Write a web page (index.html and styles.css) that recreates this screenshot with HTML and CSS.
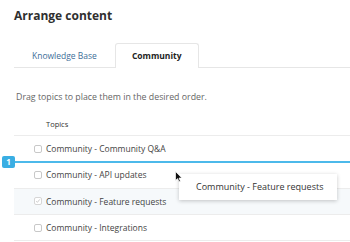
FILE: index.html
```html
<!DOCTYPE html>
<html>
<head>
<meta charset="utf-8">
<link rel="stylesheet" href="styles.css">
</head>
<body>
<div class="page">
  <h1 class="title">Arrange content</h1>
  <div class="tabs">
    <div class="tab">Knowledge Base</div>
    <div class="tab active">Community</div>
  </div>
  <p class="desc">Drag topics to place them in the desired order.</p>
  <div class="list">
    <div class="head">Topics</div>
    <div class="row"><span class="cb"></span><span>Community - Community Q&amp;A</span></div>
    <div class="row"><span class="cb"></span><span>Community - API updates</span></div>
    <div class="row dragging"><span class="cb checked"><svg viewBox="0 0 8 8" width="8" height="8"><path d="M1.6 4.2 L3.2 5.8 L6.4 1.8" fill="none" stroke="#b5b5b5" stroke-width="0.9"/></svg></span><span>Community - Feature requests</span></div>
    <div class="row"><span class="cb"></span><span>Community - Integrations</span></div>
  </div>
  <div class="drop"><span class="badge">1</span><span class="dropline"></span></div>
  <div class="ghost">Community - Feature requests</div>
  <svg class="cursor" viewBox="0 0 8 12" width="8" height="12"><path d="M0.5 0.5 L0.5 9.5 L2.6 7.6 L4 10.8 L5.4 10.2 L4 7.1 L6.9 7 Z" fill="#111" stroke="#fff" stroke-width="0.7"/></svg>
</div>
</body>
</html>
```
FILE: styles.css
```css
* { box-sizing: border-box; }
html, body { margin: 0; padding: 0; background: #fff; }
body { font-family: "Open Sans", "Liberation Sans", sans-serif; color: #333; }
.page { position: relative; width: 350px; height: 242px; overflow: hidden; padding-left: 14px; }
.title { margin: 0; padding-top: 7px; font-size: 12px; line-height: 18px; font-weight: 700; color: #2f2f2f; }
.tabs { display: flex; margin-top: 18px; border-bottom: 1px solid #e6e6e6; height: 25px; }
.tab { padding: 0 17px; font-size: 8.5px; line-height: 24px; color: #3d6e98; border: 1px solid transparent; border-bottom: none; }
.tab.active { color: #222; font-weight: 700; border-color: #e6e6e6; border-radius: 3px 3px 0 0; background: #fff; margin-bottom: -1px; height: 25px; padding: 0 16px; }
.desc { margin: 0; padding: 23px 0 0 2px; font-size: 8.8px; line-height: 12px; color: #666; }
.list { margin-top: 15px; }
.head { height: 18px; padding-left: 32px; font-size: 7.5px; line-height: 12px; color: #333; border-bottom: 1px solid #ececec; }
.row { display: flex; align-items: center; height: 26.3px; border-bottom: 1px solid #ececec; font-size: 8.5px; color: #444; }
.row.dragging { background: #f6f9fb; }
.cb { display: inline-flex; align-items: center; justify-content: center; width: 8px; height: 8px; margin-left: 20px; margin-right: 4px; border: 1px solid #c8c8c8; border-radius: 2px; background: #fff; }
.cb.checked { border-color: #d6d6d6; }
.cb svg { display: block; }
.drop { position: absolute; left: 2px; top: 156px; right: 0; display: flex; align-items: center; }
.badge { width: 13px; height: 12px; border-radius: 2px; background: #3aaee3; color: #fff; font-size: 8px; font-weight: 700; line-height: 12px; text-align: center; }
.dropline { flex: 1; height: 1.5px; background: #4cb9ea; }
.ghost { position: absolute; left: 179px; top: 174px; width: 158px; height: 26px; background: #fff; box-shadow: 0 1px 4px rgba(0,0,0,0.22); font-size: 9px; line-height: 26px; padding-left: 17px; color: #333; }
.cursor { position: absolute; left: 175px; top: 171px; }
```
